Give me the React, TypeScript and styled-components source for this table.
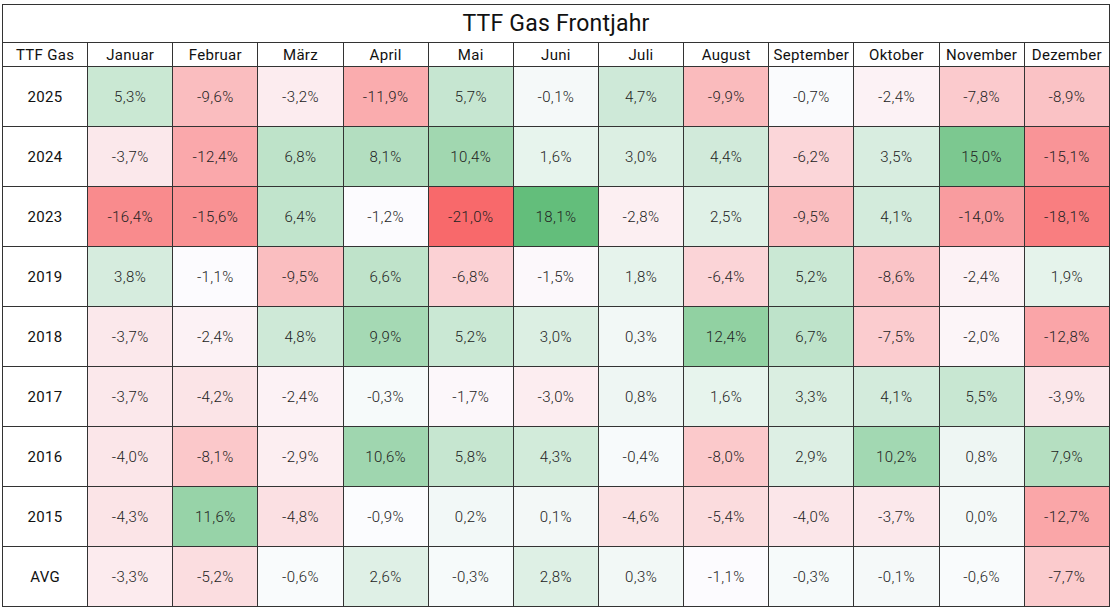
import React from "react";
import styled, { createGlobalStyle } from "styled-components";

const GlobalStyle = createGlobalStyle`
    html, body {
        margin: 0;
        padding: 0;
        background: #ffffff;
    }
    body {
        font-family: Roboto, "Liberation Sans", sans-serif;
        color: #1a1a1a;
    }
`;

const Page = styled.div`
    padding: 4px 2px 0 2px;
`;

const Table = styled.table`
    width: 1108px;
    border-collapse: collapse;
    table-layout: fixed;
    border: 1px solid #333;
`;

const TitleCell = styled.th`
    height: 37px;
    padding: 0;
    border: 1px solid #333;
    font-size: 23px;
    font-weight: 400;
    letter-spacing: 0.2px;
    color: #111;
    text-align: center;
    vertical-align: middle;
`;

const HeadCell = styled.th`
    height: 23px;
    padding: 0;
    border: 1px solid #333;
    font-size: 15px;
    font-weight: 400;
    letter-spacing: 0.3px;
    color: #111;
    text-align: center;
    white-space: nowrap;
`;

const Row = styled.tr`
    height: 60px;
`;

const YearCell = styled.td`
    padding: 0;
    border: 1px solid #333;
    font-size: 15px;
    font-weight: 400;
    letter-spacing: 0.3px;
    color: #111;
    text-align: center;
    background: #ffffff;
`;

const ValueCell = styled.td<{ $bg: string }>`
    padding: 0;
    border: 1px solid #333;
    font-size: 15px;
    font-weight: 300;
    letter-spacing: 0.4px;
    color: #222;
    text-align: center;
    background: ${(p) => p.$bg};
`;

const months = [
    "Januar", "Februar", "März", "April", "Mai", "Juni",
    "Juli", "August", "September", "Oktober", "November", "Dezember",
];

const years: [string, number[]][] = [
    ["2025", [5.3, -9.6, -3.2, -11.9, 5.7, -0.1, 4.7, -9.9, -0.7, -2.4, -7.8, -8.9]],
    ["2024", [-3.7, -12.4, 6.8, 8.1, 10.4, 1.6, 3.0, 4.4, -6.2, 3.5, 15.0, -15.1]],
    ["2023", [-16.4, -15.6, 6.4, -1.2, -21.0, 18.1, -2.8, 2.5, -9.5, 4.1, -14.0, -18.1]],
    ["2019", [3.8, -1.1, -9.5, 6.6, -6.8, -1.5, 1.8, -6.4, 5.2, -8.6, -2.4, 1.9]],
    ["2018", [-3.7, -2.4, 4.8, 9.9, 5.2, 3.0, 0.3, 12.4, 6.7, -7.5, -2.0, -12.8]],
    ["2017", [-3.7, -4.2, -2.4, -0.3, -1.7, -3.0, 0.8, 1.6, 3.3, 4.1, 5.5, -3.9]],
    ["2016", [-4.0, -8.1, -2.9, 10.6, 5.8, 4.3, -0.4, -8.0, 2.9, 10.2, 0.8, 7.9]],
    ["2015", [-4.3, 11.6, -4.8, -0.9, 0.2, 0.1, -4.6, -5.4, -4.0, -3.7, 0.0, -12.7]],
    ["AVG", [-3.3, -5.2, -0.6, 2.6, -0.3, 2.8, 0.3, -1.1, -0.3, -0.1, -0.6, -7.7]],
];

// excel style 3 colour scale: red - white - green, midpoint = median of the years
const red = [248, 105, 107];
const white = [252, 252, 255];
const green = [99, 190, 123];

const all = years.slice(0, -1).flatMap(([, v]) => v);
const sorted = [...all].sort((a, b) => a - b);
const min = sorted[0];
const max = sorted[sorted.length - 1];
const mid = (sorted[sorted.length / 2 - 1] + sorted[sorted.length / 2]) / 2;

const mix = (a: number[], b: number[], t: number) =>
    `rgb(${a.map((c, i) => Math.round(c + (b[i] - c) * t)).join(",")})`;

const scale = (v: number) => {
    if (v >= mid) return mix(white, green, Math.min(1, (v - mid) / (max - mid)));
    return mix(white, red, Math.min(1, (mid - v) / (mid - min)));
};

const fmt = (v: number) => v.toFixed(1).replace(".", ",") + "%";

export default function App() {
    return (
        <Page>
            <GlobalStyle />
            <Table>
                <thead>
                    <tr>
                        <TitleCell colSpan={13}>TTF Gas Frontjahr</TitleCell>
                    </tr>
                    <tr>
                        <HeadCell>TTF Gas</HeadCell>
                        {months.map((m) => (
                            <HeadCell key={m}>{m}</HeadCell>
                        ))}
                    </tr>
                </thead>
                <tbody>
                    {years.map(([year, values]) => (
                        <Row key={year}>
                            <YearCell>{year}</YearCell>
                            {values.map((v, i) => (
                                <ValueCell key={i} $bg={scale(v)}>
                                    {fmt(v)}
                                </ValueCell>
                            ))}
                        </Row>
                    ))}
                </tbody>
            </Table>
        </Page>
    );
}
